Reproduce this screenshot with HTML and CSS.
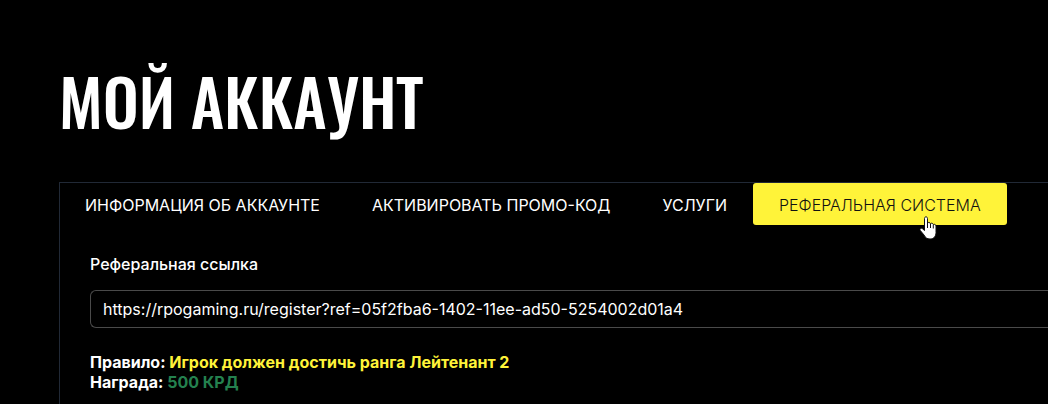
FILE: index.html
```
<!DOCTYPE html>
<html lang="ru">
<head>
  <meta charset="UTF-8">
  <meta name="viewport" content="width=device-width, initial-scale=1">
  <title>Мой аккаунт</title>
  <link rel="stylesheet" href="styles.css">
</head>
<body>
  <main class="account">
    <h1>МОЙ АККАУНТ</h1>

    <div class="panel">
      <nav class="tabs">
        <a href="#info">ИНФОРМАЦИЯ ОБ АККАУНТЕ</a>
        <a href="#promo">АКТИВИРОВАТЬ ПРОМО-КОД</a>
        <a href="#services">УСЛУГИ</a>
        <a href="#referral" class="active">РЕФЕРАЛЬНАЯ СИСТЕМА
          <svg class="pointer" width="18" height="24" viewBox="0 0 18 24" aria-hidden="true">
            <path d="M5.5 14.5V2.6C5.5 .2 8.5 .2 8.5 2.6V7.2C9.2 6 11.2 6.300 11.500 7.800C12.400 6.700 14 7.200 14.300 8.600C15.500 7.800 17 8.600 17 10V16.500C17 20.500 14.500 23 11 23C8 23 6.300 21.500 5 19L1.300 14.500C.2 12.800 2 11.600 3.300 12.600Z" fill="#fff" stroke="#111" stroke-width="1"/>
            <path d="M8.500 7V12M11.500 8V12M14.300 9V12.500" fill="none" stroke="#111" stroke-width="1"/>
          </svg>
        </a>
      </nav>

      <div class="content" id="referral">
        <label for="ref-link">Реферальная ссылка</label>
        <input type="text" id="ref-link" value="https://rpogaming.ru/register?ref=05f2fba6-1402-11ee-ad50-5254002d01a4" readonly>

        <div class="terms">
          Правило: <span class="rule">Игрок должен достичь ранга Лейтенант 2</span><br>
          Награда: <span class="reward">500 КРД</span>
        </div>
      </div>
    </div>
  </main>
</body>
</html>
```

FILE: styles.css
```
* {
  box-sizing: border-box;
}
body {
  margin: 0;
  background-color: #000;
  color: #fff;
  font-family: Inter, "Liberation Sans", sans-serif;
  font-size: 16px;
  line-height: 20px;
}
.account {
  padding: 60px 0 0 59px;
}
h1 {
  margin: 0 0 42px;
  font-family: Oswald, "Liberation Sans Narrow", "Arial Narrow", sans-serif;
  font-size: 64px;
  font-weight: 500;
  line-height: 80px;
  white-space: nowrap;
}
.panel {
  border-top: 1px solid #212936;
  border-left: 1px solid #212936;
}
.tabs {
  display: flex;
  margin-left: -1px;
}
.tabs a {
  position: relative;
  padding: 12px 26px 10px;
  border-radius: 3px;
  color: #fff;
  text-decoration: none;
  white-space: nowrap;
}
.tabs a.active {
  background-color: #fff339;
  color: #111;
  font-weight: 300;
}
.pointer {
  position: absolute;
  right: 70px;
  bottom: -15px;
}
.content {
  padding: 29px 0 12px 30px;
}
label {
  display: block;
  margin-bottom: 16px;
  font-weight: 500;
}
input {
  display: block;
  width: 100%;
  height: 38px;
  padding: 0 12px;
  border: 1px solid #4a4a4a;
  border-right: 0;
  border-radius: 6px 0 0 6px;
  background-color: #000;
  color: #fff;
  font: inherit;
}
.terms {
  margin-top: 24px;
  font-weight: 700;
}
.rule {
  color: #fff339;
}
.reward {
  color: #24814f;
}
```
